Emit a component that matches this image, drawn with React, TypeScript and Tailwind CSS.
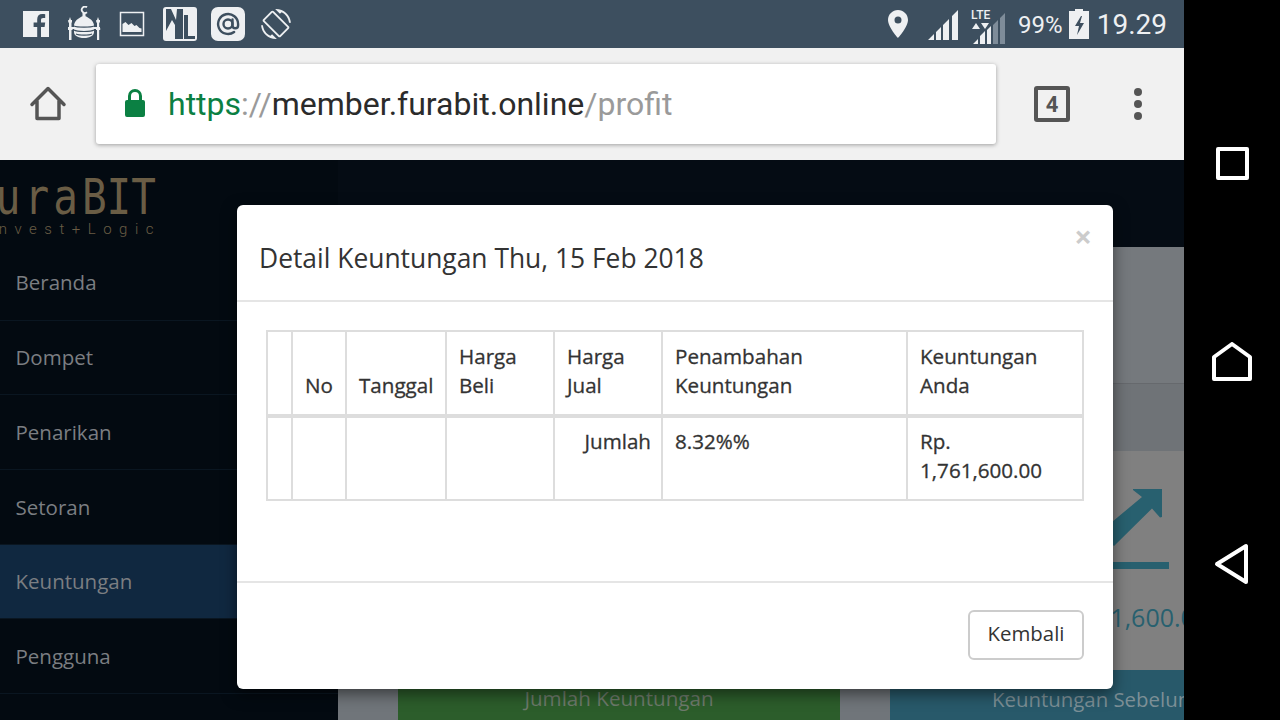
import React from "react";

const menu = ["Beranda", "Dompet", "Penarikan", "Setoran", "Keuntungan", "Pengguna"];

function StatusIcons() {
  return (
    <div className="flex items-center pl-[22px]">
      {/* facebook */}
      <svg width="28" height="28" viewBox="0 0 28 28">
        <path fill="#eef0f2" d="M1 1h26v26h-8V17h3.600l.6-4.400H19v-2.400c0-1.400.5-2.200 2.200-2.200h2V4.200c-.6-.1-1.700-.2-3-.2-3 0-5 1.800-5 5.200v3.400h-3.600V17h3.600v10H1z" />
      </svg>
      {/* mosque */}
      <svg width="36" height="36" viewBox="0 0 36 36" className="ml-[16px]">
        <g fill="#eef0f2">
          <path d="M3 14l1-3 1 3h1v2l-.5 1v5h1v2h-1v10H3V24H2v-2h1v-5l-.8-1v-2zM31 14l1-3 1 3h1v2l-.8 1v5h1v2h-1v10H31V24h-1v-2h1v-5l-.8-1v-2z" />
          <path d="M18 9c-3 2.500-9 4-10 10v7c0 3.500 4 6 10 6s10-2.500 10-6v-7c-1-6-7-7.500-10-10z" />
          <path d="M8 21H2v2h6zM34 21h-6v2h6z" />
        </g>
        <path fill="none" stroke="#3d4f5f" strokeWidth="1.200" d="M8 20c3 1.500 17 1.500 20 0M8 24c3 2 17 2 20 0M10 28c3 1.500 13 1.500 16 0" />
        <path fill="none" stroke="#eef0f2" strokeWidth="1.800" d="M21 1.300a3.200 3.200 0 1 0 0 5" />
        <rect x="16.500" y="7" width="3" height="3" fill="#eef0f2" />
      </svg>
      {/* picture */}
      <svg width="26" height="26" viewBox="0 0 26 26" className="ml-[17px]">
        <rect x="1.500" y="1.500" width="23" height="23" fill="none" stroke="#eef0f2" strokeWidth="1.500" />
        <path fill="#eef0f2" d="M3.500 21v-8l3-2 3 3 3-2 3 3 2-1 3 3 2 .5V21z" />
      </svg>
      {/* ML logo */}
      <div className="ml-[18px] h-[34px] w-[34px] rounded-[3px] bg-[#eef0f2]">
        <svg width="34" height="34" viewBox="0 0 34 34">
          <path fill="#3d4f5f" d="M3 2h5l5 11 1-11h6v30h-8V18l-3-5-6 11zM21 8h4v21h7v3H21z" />
        </svg>
      </div>
      {/* at sign */}
      <div className="ml-[14px] flex h-[34px] w-[34px] items-center justify-center rounded-[7px] bg-[#eef0f2]">
        <svg width="24" height="24" viewBox="0 0 24 24" fill="none" stroke="#3d4f5f" strokeWidth="2.400" strokeLinecap="round">
          <circle cx="12" cy="12" r="4.500" />
          <path d="M16.500 7.500V13.500a2.800 2.800 0 0 0 5.600 0V12a10 10 0 1 0-4 8" />
        </svg>
      </div>
      {/* screen rotation */}
      <svg width="30" height="30" viewBox="0 0 24 24" className="ml-[16px]">
        <path fill="#eef0f2" d="M16.480 2.520c3.270 1.550 5.610 4.720 5.970 8.480h1.500C23.440 4.840 18.290 0 12 0l-.66.03 3.810 3.810 1.330-1.320zm-6.250-.77c-.59-.59-1.540-.59-2.120 0L1.750 8.110c-.59.59-.59 1.540 0 2.120l12.020 12.020c.59.59 1.540.59 2.120 0l6.360-6.360c.59-.59.59-1.540 0-2.120L10.230 1.750zm4.600 19.440L2.810 9.170l6.360-6.360 12.020 12.020-6.360 6.360zm-7.310.29C4.250 19.940 1.910 16.760 1.550 13H.05C.56 19.160 5.710 24 12 24l.66-.03-3.810-3.810-1.330 1.320z" />
      </svg>
    </div>
  );
}

function StatusRight() {
  return (
    <div className="flex items-center pr-[17px] text-[#eef0f2]">
      <svg width="22" height="30" viewBox="0 0 22 30" className="mr-[19px]">
        <path fill="#eef0f2" fillRule="evenodd" d="M11 1C5.500 1 1 5.400 1 11c0 7 10 18 10 18s10-11 10-18C21 5.400 16.500 1 11 1zm0 13.500a3.500 3.500 0 1 1 0-7 3.500 3.500 0 0 1 0 7z" />
      </svg>
      <svg width="31" height="31" viewBox="0 0 31 31" className="mr-[12px] mt-[2px]">
        <path fill="#eef0f2" d="M0 30l6-6v6zM8 30v-8l5-5v13zM15 30V15l6-6v21zM24 30V6l6-6v30z" />
      </svg>
      <div className="relative mr-[7px] h-[40px] w-[40px]">
        <span className="absolute left-0 top-[4px] font-['Roboto',sans-serif] text-[12px] font-medium leading-[14px]">LTE</span>
        <svg width="40" height="40" viewBox="0 0 40 40" className="absolute left-0 top-0">
          <path fill="#eef0f2" d="M1 25l4-6 4 6zM10 19h8l-4 6zM2 40l5-5v5zM9 40v-8l5-5v13zM16 40V26l4-4v18z" />
          <path fill="#7e8c99" d="M22 40V21l5-5v24zM29 40V14l5-5v31z" />
        </svg>
      </div>
      <span className="mt-[1px] font-['Roboto',sans-serif] text-[24px] leading-none">99%</span>
      <svg width="20" height="30" viewBox="0 0 20 30" className="ml-[6px] mr-[8px]">
        <path fill="#eef0f2" fillRule="evenodd" d="M6 0h8v2h6v28H0V2h6zM12 7l-6 10h4l-2 9 7-12h-4l2-7z" />
      </svg>
      <span className="mt-[1px] font-['Roboto',sans-serif] text-[28px] leading-none">19.29</span>
    </div>
  );
}

function BrowserBar() {
  return (
    <div className="flex h-[112px] items-center bg-[#f1f1f1]">
      <div className="flex w-[96px] justify-center">
        <svg width="38" height="38" viewBox="0 0 38 38" fill="none" stroke="#555555" strokeWidth="3.500" strokeLinejoin="round" strokeLinecap="round">
          <path d="M3 19.500L19 3.500l16 16M8 16v17.500h22V16" />
        </svg>
      </div>
      <div className="flex h-[80px] w-[900px] items-center rounded-[3px] bg-white pl-[28px] shadow-[0_1px_4px_rgba(0,0,0,0.35)]">
        <svg width="22" height="30" viewBox="0 0 22 30" className="-mt-[3px] mr-[22px]">
          <path fill="#0b8043" fillRule="evenodd" d="M11 1a7 7 0 0 0-7 7v4H3a2 2 0 0 0-2 2v13a2 2 0 0 0 2 2h16a2 2 0 0 0 2-2V14a2 2 0 0 0-2-2h-1V8a7 7 0 0 0-7-7zm4 11H7V8a4 4 0 0 1 8 0z" />
        </svg>
        <span className="font-['Roboto',sans-serif] text-[32px] leading-none">
          <span className="text-[#0b8043]">https</span>
          <span className="text-[#9a9a9a]">://</span>
          <span className="text-[#2b2b2b]">member.furabit.online</span>
          <span className="text-[#9a9a9a]">/profit</span>
        </span>
      </div>
      <div className="ml-[38px] flex h-[36px] w-[36px] items-center justify-center rounded-[3px] border-[4px] border-[#555555] font-['Roboto',sans-serif] text-[22px] font-bold text-[#555555]">
        4
      </div>
      <div className="ml-[64px] flex flex-col gap-[4px]">
        <div className="h-[8px] w-[8px] rounded-full bg-[#555555]" />
        <div className="h-[8px] w-[8px] rounded-full bg-[#555555]" />
        <div className="h-[8px] w-[8px] rounded-full bg-[#555555]" />
      </div>
    </div>
  );
}

function Sidebar() {
  return (
    <div className="flex w-[338px] shrink-0 flex-col bg-[#030a11]">
      <div className="h-[86px] overflow-hidden text-[#6a5d45]">
        <div className="mt-[18px] flex h-[30px] w-[156px] origin-top scale-y-[1.23] justify-end whitespace-nowrap font-['DejaVu_Sans_Mono',monospace] text-[41px] leading-[30px]">
          <span className="tracking-[4px]">Fura</span>
          <span>BIT</span>
        </div>
        <div className="mt-[13px] flex w-[161px] justify-end whitespace-nowrap font-['Roboto',sans-serif] text-[15px] font-light leading-[16px] tracking-[7.500px]">
          Invest+Logic
        </div>
      </div>
      {menu.map((item) => (
        <div
          key={item}
          className={
            "flex h-[74.7px] items-center border-b border-[#0a1621] pl-[15.500px] font-['Open_Sans',sans-serif] text-[20.500px] text-[#7b7e82] " +
            (item === "Keuntungan" ? "bg-[#102840]" : "")
          }
        >
          {item}
        </div>
      ))}
    </div>
  );
}

function PageBehind() {
  return (
    <div className="flex min-w-0 flex-1 flex-col font-['Open_Sans',sans-serif]">
      <div className="h-[87px] bg-[#050c14]" />
      <div className="h-[137px] border-b border-[#66696d] bg-[#75797d]" />
      <div className="h-[67px] bg-[#6f7377]" />
      <div className="relative h-[219px] bg-[#808080]">
        {/* arrow over a baseline */}
        <svg width="70" height="82" viewBox="0 0 70 82" fill="#28606f" className="absolute left-[762px] top-[37px]">
          <path d="M33 1h29v28l-2 .5-8-9L14 58 0 44 42 9l-9-7z" />
          <path d="M0 74h69v7H0z" />
        </svg>
        <div className="absolute left-[723px] top-[148px] whitespace-nowrap text-[25px] text-[#28606f]">
          1,761,600.00
        </div>
      </div>
      <div className="flex h-[50px] flex-1 gap-[50px] bg-[#70757a] pl-[60px]">
        <div className="flex w-[442px] shrink-0 items-end justify-center bg-[#2c5d2b] pb-[6px] text-[20.600px] text-[#6e7a6c]">
          Jumlah Keuntungan
        </div>
        <div className="w-[400px] shrink-0 whitespace-nowrap bg-[#28596a] pl-[102px] pt-[14px] text-[20.400px] text-[#7c8f96]">
          Keuntungan Sebelumnya
        </div>
      </div>
    </div>
  );
}

function Modal() {
  const th = "border-2 border-[#dddddd] px-[12px] pt-[10px] pb-[14px] text-left align-bottom font-normal leading-[29px] [-webkit-text-stroke:0.3px_#333333]";
  const td = "border-2 border-[#dddddd] px-[12px] pt-[9px] pb-[14px] align-top font-normal leading-[29px] [-webkit-text-stroke:0.3px_#333333]";
  return (
    <div className="absolute left-[237px] top-[45px] flex h-[484px] w-[876px] flex-col rounded-[6px] bg-white font-['Open_Sans',sans-serif] text-[#333333] shadow-[0_5px_15px_rgba(0,0,0,0.5)]">
      <div className="relative h-[97px] border-b-2 border-[#e5e5e5] pl-[22px] pt-[33px]">
        <h4 className="text-[26.400px] leading-[40px]">Detail Keuntungan Thu, 15 Feb 2018</h4>
        <span className="absolute right-[21px] top-[11px] text-[31px] font-bold leading-[40px] text-[#cccccc]">×</span>
      </div>
      <div className="h-[279px] px-[29px] pt-[28px]">
        <table className="w-[816px] table-fixed border-collapse text-[20.600px]">
          <colgroup>
            <col className="w-[25px]" />
            <col className="w-[54px]" />
            <col className="w-[100px]" />
            <col className="w-[108px]" />
            <col className="w-[108px]" />
            <col className="w-[245px]" />
            <col className="w-[176px]" />
          </colgroup>
          <thead>
            <tr className="border-b-[4px] border-[#dddddd]">
              <th className={th}></th>
              <th className={th}>No</th>
              <th className={th + " whitespace-nowrap"}>Tanggal</th>
              <th className={th}>Harga Beli</th>
              <th className={th}>Harga Jual</th>
              <th className={th}>Penambahan Keuntungan</th>
              <th className={th}>Keuntungan Anda</th>
            </tr>
          </thead>
          <tbody>
            <tr>
              <td className={td}></td>
              <td className={td}></td>
              <td className={td}></td>
              <td className={td}></td>
              <td className={td + " text-right !pr-[10px]"}>Jumlah</td>
              <td className={td}>8.32%%</td>
              <td className={td}>Rp. 1,761,600.00</td>
            </tr>
          </tbody>
        </table>
      </div>
      <div className="flex flex-1 items-start justify-end border-t-2 border-[#e5e5e5] pr-[29px] pt-[27px]">
        <button type="button" className="h-[50px] w-[116px] rounded-[6px] border-2 border-[#cccccc] bg-white pb-[3px] text-[20.400px] text-[#333333]">
          Kembali
        </button>
      </div>
    </div>
  );
}

function NavBar() {
  return (
    <div className="flex w-[96px] shrink-0 flex-col items-center bg-black pt-[147px]">
      <div className="h-[33px] w-[33px] rounded-[2px] border-[4px] border-white" />
      <svg width="42" height="42" viewBox="0 0 42 42" fill="none" stroke="white" strokeWidth="4" strokeLinejoin="round" className="mt-[162px]">
        <path d="M3 15L21 2l18 13v22H3z" />
      </svg>
      <svg width="38" height="42" viewBox="0 0 38 42" fill="none" stroke="white" strokeWidth="4" strokeLinejoin="round" className="mt-[159px]">
        <path d="M4 21L33 3v36z" />
      </svg>
    </div>
  );
}

export default function App() {
  return (
    <div className="flex h-screen w-full overflow-hidden bg-black">
      <div className="flex min-w-0 flex-1 flex-col">
        <div className="flex h-[48px] items-center justify-between bg-[#3d4f5f]">
          <StatusIcons />
          <StatusRight />
        </div>
        <BrowserBar />
        <div className="relative flex min-h-0 flex-1 overflow-hidden">
          <Sidebar />
          <PageBehind />
          <Modal />
        </div>
      </div>
      <NavBar />
    </div>
  );
}
